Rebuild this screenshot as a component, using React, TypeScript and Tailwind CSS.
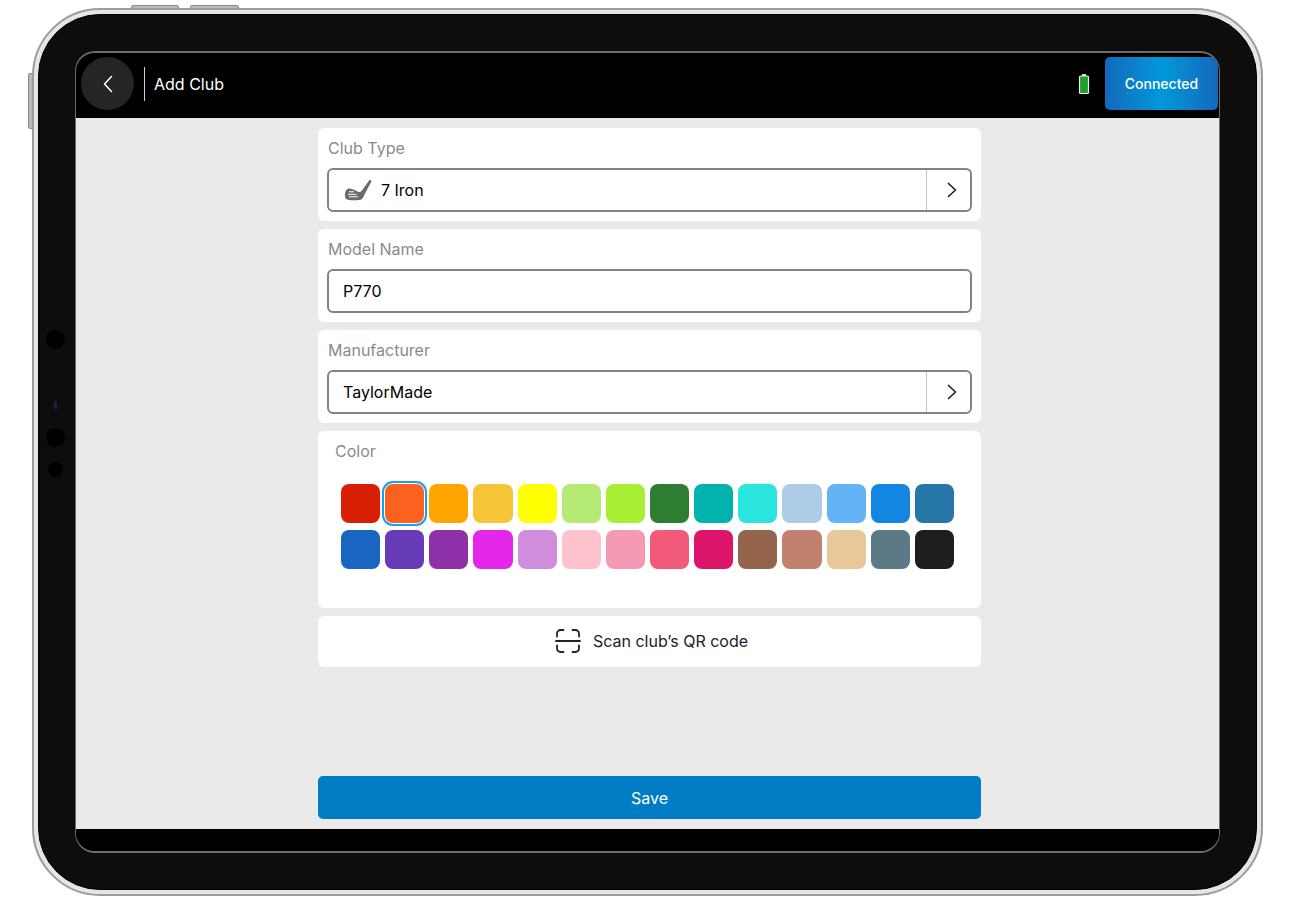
import { useState } from 'react';

const COLORS = [
  '#d81e05', '#fb6220', '#ffa500', '#f6c436', '#ffff00', '#b5eb75', '#a6ef32',
  '#2f7d32', '#02b2ad', '#2ae4de', '#aecbe8', '#64b3f7', '#1386e2', '#2776a8',
  '#1966c2', '#673ab7', '#8e30a8', '#e326ea', '#d08cdd', '#ffc1cd', '#f49ab5',
  '#f15a78', '#dd156a', '#93634b', '#c2806e', '#e8c798', '#5c7a86', '#1e1e1e',
];

function ChevronRight() {
  return (
    <svg width="10" height="16" viewBox="0 0 10 16" fill="none" stroke="#222" strokeWidth="1.7" strokeLinecap="round" strokeLinejoin="round" aria-hidden="true">
      <path d="M1.5 1.5 8.5 8l-7 6.5" />
    </svg>
  );
}

function IronIcon() {
  return (
    <svg width="30" height="22" viewBox="0 0 30 22" aria-hidden="true">
      <path
        d="M26.2 1.400c.7-1 2.700 0 2.100 1.200L20.800 17c-1 2.500-2.300 3.900-4.600 4.100-3.500.4-8 .3-11.200-.3C2.700 20.300 2 18.600 2 16.200c0-3.900 1.600-6.600 4.500-6.600 2.900 0 5.900 2.300 8.700 3.300 1.500.5 2.700 0 3.500-1.200z"
        fill="#69696e"
      />
      <path d="M6 12.800h5M5 15.300h8.500M6 17.800h9" stroke="#fff" strokeWidth="1" />
    </svg>
  );
}

function ScanIcon() {
  return (
    <svg width="26" height="26" viewBox="0 0 26 26" fill="none" stroke="#222" strokeWidth="1.8" strokeLinecap="round" aria-hidden="true">
      <path d="M2 8.500V5.500A3.500 3.500 0 0 1 5.500 2H8.500M17.500 2h3A3.500 3.500 0 0 1 24 5.500v3M24 17.500v3a3.500 3.500 0 0 1-3.500 3.500h-3M8.500 24h-3A3.500 3.500 0 0 1 2 20.500v-3M1 13h24" />
    </svg>
  );
}

function PickerCard({ id, label, value, icon }: { id: string; label: string; value: string; icon?: React.ReactNode }) {
  return (
    <section className="rounded-md bg-white px-[9px] pb-[9px]">
      <div id={`${id}-label`} className="flex h-10 items-center px-px text-[#8a8a8e]">{label}</div>
      <button
        type="button"
        aria-labelledby={`${id}-label ${id}-value`}
        className="flex h-11 w-full items-stretch rounded-md border-2 border-[#828287] text-left"
      >
        <span className="flex flex-1 items-center gap-2 pl-[14px]">
          {icon}
          <span id={`${id}-value`}>{value}</span>
        </span>
        <span className="flex w-11 items-center justify-center border-l border-[#c4c4c6] pl-1.5">
          <ChevronRight />
        </span>
      </button>
    </section>
  );
}

export default function App() {
  const [model, setModel] = useState('P770');
  const [color, setColor] = useState(COLORS[1]);

  return (
    <div className="flex min-h-screen bg-white px-8 pt-2 pb-1 font-['Inter',sans-serif] text-base text-black">
      <div className="relative flex flex-1">
        {/* volume and power buttons */}
        <div className="absolute -top-[3px] left-[99px] h-3 w-12 rounded-t-xs border border-[#8c8c8c] bg-[#b9b9b9]" />
        <div className="absolute -top-[3px] left-[158px] h-3 w-[49px] rounded-t-xs border border-[#8c8c8c] bg-[#b9b9b9]" />
        <div className="absolute top-[65px] -left-1 h-14 w-3 rounded-l-xs border border-[#8c8c8c] bg-[#b9b9b9]" />

        <div className="relative flex flex-1 rounded-[68px] border-2 border-[#9c9c9c] bg-[#e6e6e6] p-1">
          <div className="relative flex flex-1 rounded-[62px] border border-black bg-[#0d0d0d] px-9 py-9">
            {/* sensors */}
            <div className="absolute top-[315px] left-[7px] size-[19px] rounded-full bg-black" />
            <div className="absolute top-[386px] left-[15px] h-2 w-[3px] rounded-full bg-[#20204a]" />
            <div className="absolute top-[413px] left-[7px] size-[19px] rounded-full bg-black" />
            <div className="absolute top-[447px] left-[9px] size-[15px] rounded-full bg-black" />

            <div className="flex flex-1 flex-col overflow-hidden rounded-[20px] border border-y-2 border-[#6c6c6c] bg-black">
              <header className="flex items-center pt-1 pr-px pb-2 pl-[5px] text-white">
                <button type="button" aria-label="Back" className="flex size-[53px] items-center justify-center rounded-full bg-[#252525]">
                  <svg width="10" height="18" viewBox="0 0 10 18" fill="none" stroke="#fff" strokeWidth="1.5" strokeLinecap="round" strokeLinejoin="round" aria-hidden="true">
                    <path d="M8.5 1.5 1.5 9l7 7.5" />
                  </svg>
                </button>
                <div className="ml-[10px] h-[34px] w-px bg-[#d0d0d0]" />
                <h1 className="ml-[9px] text-base">Add Club</h1>
                <svg className="mr-[15px] ml-auto" width="12" height="22" viewBox="0 0 12 22" aria-hidden="true">
                  <rect x="4" y="1" width="4" height="2" rx="0.5" fill="#ddd" />
                  <rect x="1.5" y="3" width="9" height="17.5" rx="1" fill="#1fa02c" stroke="#dfeedf" strokeWidth="1.2" />
                </svg>
                <button
                  type="button"
                  className="h-[53px] w-[113px] rounded-[5px] bg-linear-to-r from-[#1369bb] via-[#0098da] to-[#1369bb] text-sm font-medium"
                >
                  Connected
                </button>
              </header>

              <main className="flex flex-1 flex-col items-center bg-[#eaeaea] py-[10px] pl-1">
                <form className="flex w-full max-w-[663px] flex-1 flex-col gap-2" onSubmit={(e) => e.preventDefault()}>
                  <PickerCard id="club-type" label="Club Type" value="7 Iron" icon={<IronIcon />} />

                  <section className="rounded-md bg-white px-[9px] pb-[9px]">
                    <label htmlFor="model" className="flex h-10 items-center px-px text-[#8a8a8e]">Model Name</label>
                    <input
                      id="model"
                      type="text"
                      value={model}
                      onChange={(e) => setModel(e.target.value)}
                      className="block h-11 w-full rounded-md border-2 border-[#828287] bg-white px-[14px]"
                    />
                  </section>

                  <PickerCard id="manufacturer" label="Manufacturer" value="TaylorMade" />

                  <section className="rounded-md bg-white pr-[27px] pb-[39px] pl-[23px]">
                    <h2 id="color-label" className="-ml-[6px] flex h-10 items-center text-[#8a8a8e]">Color</h2>
                    <div role="radiogroup" aria-labelledby="color-label" className="mt-[13px] grid grid-cols-14 gap-x-[5px] gap-y-[7px]">
                      {COLORS.map((c) => (
                        <input
                          key={c}
                          type="radio"
                          name="color"
                          aria-label={c}
                          checked={color === c}
                          onChange={() => setColor(c)}
                          className="h-[39px] w-full appearance-none rounded-lg outline-offset-1 outline-[#14a0f5] checked:outline-2"
                          style={{ backgroundColor: c }}
                        />
                      ))}
                    </div>
                  </section>

                  <button type="button" className="flex h-[51px] items-center justify-center gap-3 rounded-md bg-white pb-px pl-1 text-[#222]">
                    <ScanIcon />
                    Scan club’s QR code
                  </button>

                  <button type="submit" className="mt-auto h-[43px] rounded-[5px] bg-[#007dc5] text-white">Save</button>
                </form>
              </main>

              <div className="h-[22px] bg-black" />
            </div>
          </div>
        </div>
      </div>
    </div>
  );
}
